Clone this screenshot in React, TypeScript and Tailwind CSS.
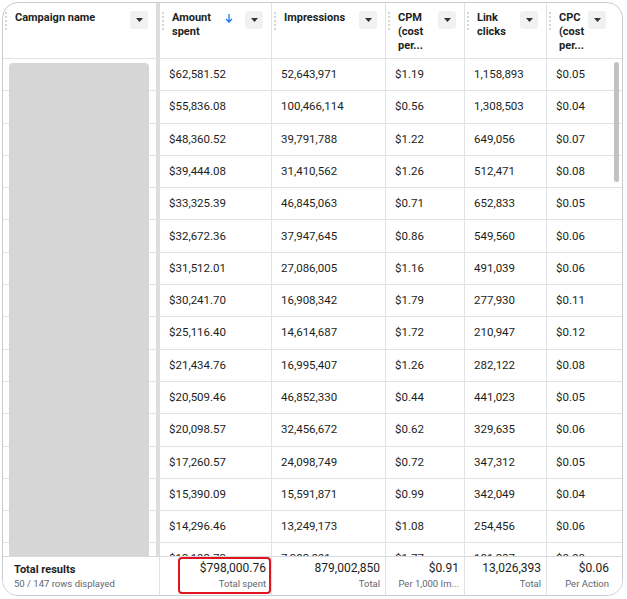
import React from "react";

const rows = [
  ["$62,581.52","52,643,971","$1.19","1,158,893","$0.05"],
  ["$55,836.08","100,466,114","$0.56","1,308,503","$0.04"],
  ["$48,360.52","39,791,788","$1.22","649,056","$0.07"],
  ["$39,444.08","31,410,562","$1.26","512,471","$0.08"],
  ["$33,325.39","46,845,063","$0.71","652,833","$0.05"],
  ["$32,672.36","37,947,645","$0.86","549,560","$0.06"],
  ["$31,512.01","27,086,005","$1.16","491,039","$0.06"],
  ["$30,241.70","16,908,342","$1.79","277,930","$0.11"],
  ["$25,116.40","14,614,687","$1.72","210,947","$0.12"],
  ["$21,434.76","16,995,407","$1.26","282,122","$0.08"],
  ["$20,509.46","46,852,330","$0.44","441,023","$0.05"],
  ["$20,098.57","32,456,672","$0.62","329,635","$0.06"],
  ["$17,260.57","24,098,749","$0.72","347,312","$0.05"],
  ["$15,390.09","15,591,871","$0.99","342,049","$0.04"],
  ["$14,296.46","13,249,173","$1.08","254,456","$0.06"],
  ["$13,193.73","7,383,001","$1.77","181,207","$0.08"],
];

const Drop = () => (
  <div className="w-[18px] h-[18px] bg-[#f0f1f2] rounded-[3px] flex items-center justify-center shrink-0">
    <svg width="7" height="4" viewBox="0 0 7 4"><path d="M0 0h7L3.5 4z" fill="#333" /></svg>
  </div>
);
const Dots = () => (
  <div className="absolute left-[2px] top-[9px] flex flex-col gap-[2px]">
    {[0,1,2,3,4].map(i => <div key={i} className="w-[2px] h-[2px] rounded-full bg-[#c5c7ca]" />)}
  </div>
);

const Head = ({ w, label, arrow, border = true }: { w: string; label: React.ReactNode; arrow?: boolean; border?: boolean }) => (
  <div className={`${w} relative shrink-0 h-[55px] flex items-start justify-between pl-[12px] pr-[8px] pt-[8px] ${border ? "border-r border-[#e1e2e4]" : ""}`}>
    <Dots />
    <div className="font-bold text-[11px] leading-[14px] text-[#1c1e21]">{label}</div>
    <div className="flex items-start gap-[12px]">
      {arrow && <svg width="8" height="10" viewBox="0 0 8 10" className="mt-[3px]"><path d="M4 0v8M1 5l3 3 3-3" stroke="#1877f2" strokeWidth="1.3" fill="none" /></svg>}
      <Drop />
    </div>
  </div>
);

const widths = ["w-[112px]", "w-[114px]", "w-[79px]", "w-[82px]", "w-[67px]"];

export default function App() {
  return (
    <div className="w-[627px] h-[599px] bg-white p-[2px]" style={{ fontFamily: "Roboto, 'Noto Sans', sans-serif" }}>
      <div className="w-[621px] h-[594px] border border-[#c9cbcf] rounded-[16px] overflow-hidden flex flex-col relative text-[#1c1e21]">
        <div className="flex border-b border-[#e1e2e4] shrink-0">
          <Head w="w-[153px]" label="Campaign name" border={false} />
          <div className="w-[4px] bg-[#dcdde0] shrink-0" />
          <Head w={widths[0]} label={<>Amount<br />spent</>} arrow />
          <Head w={widths[1]} label="Impressions" />
          <Head w={widths[2]} label={<>CPM<br />(cost<br />per...</>} />
          <Head w={widths[3]} label={<>Link<br />clicks</>} />
          <Head w={widths[4]} label={<>CPC<br />(cost<br />per...</>} border={false} />
        </div>
        <div className="flex-1 overflow-hidden relative">
          {rows.map((r, i) => (
            <div key={i} className="flex h-[32.3px] border-b border-[#e1e2e4] text-[11.5px]">
              <div className="w-[153px] shrink-0" />
              <div className="w-[4px] bg-[#dcdde0] shrink-0" />
              {r.map((c, j) => (
                <div key={j} className={`${widths[j]} shrink-0 flex items-center pl-[9px] ${j < 4 ? "border-r border-[#e1e2e4]" : ""}`}>{c}</div>
              ))}
            </div>
          ))}
          <div className="absolute left-[6px] top-[4px] w-[140px] h-[520px] bg-[#d6d6d6] rounded-[4px]" />
          <div className="absolute right-[3px] top-[3px] w-[5px] h-[120px] bg-[#c1c1c1] rounded-full" />
        </div>
        <div className="h-[39px] flex border-t border-[#d9dadd] bg-white text-[12px] shrink-0">
          <div className="w-[157px] shrink-0 pl-[11px] pt-[6px] border-r border-[#e1e2e4] text-[11px]">
            <div className="font-bold leading-[14px]">Total results</div>
            <div className="text-[9.5px] text-[#606770] leading-[14px]">50 / 147 rows displayed</div>
          </div>
          {[["$798,000.76","Total spent"],["879,002,850","Total"],["$0.91","Per 1,000 Im..."],["13,026,393","Total"],["$0.06","Per Action"]].map(([v, s], j) => (
            <div key={j} className={`${widths[j]} shrink-0 flex flex-col items-end pr-[5px] pt-[4px] ${j < 4 ? "border-r border-[#e1e2e4]" : ""} ${j === 0 ? "relative" : ""}`}>
              <div className="leading-[15px]">{v}</div>
              <div className="text-[9.5px] text-[#606770] leading-[14px] mt-[1px]">{s}</div>
              {j === 0 && <div className="absolute left-[18px] right-[0px] top-[0px] bottom-[1px] border-2 border-[#e0141e] rounded-[4px]" />}
            </div>
          ))}
        </div>
      </div>
    </div>
  );
}
